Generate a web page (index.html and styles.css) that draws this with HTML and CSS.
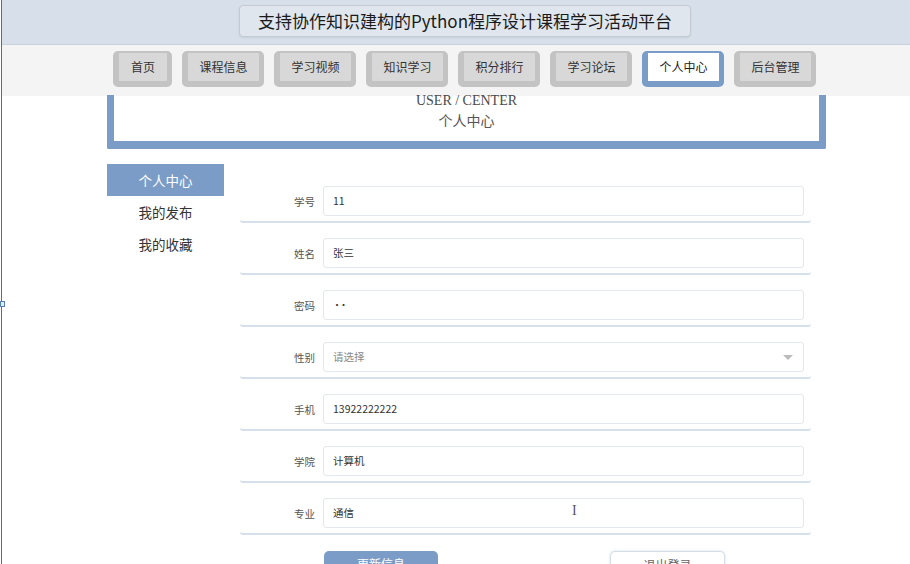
FILE: index.html
```html
<!DOCTYPE html>
<html lang="zh">
<head>
<meta charset="utf-8">
<title>个人中心</title>
<link rel="stylesheet" href="styles.css">
</head>
<body>
<div class="page">
  <span class="edge-handle"></span>
  <header class="top">
    <div class="title">支持协作知识建构的Python程序设计课程学习活动平台</div>
  </header>
  <nav class="navstrip">
    <div class="nav">
      <a class="nbtn short">首页</a>
      <a class="nbtn">课程信息</a>
      <a class="nbtn">学习视频</a>
      <a class="nbtn">知识学习</a>
      <a class="nbtn">积分排行</a>
      <a class="nbtn">学习论坛</a>
      <a class="nbtn active">个人中心</a>
      <a class="nbtn">后台管理</a>
    </div>
  </nav>
  <div class="wrap">
    <section class="banner">
      <div class="en">USER / CENTER</div>
      <div class="cn">个人中心</div>
    </section>
    <div class="main">
      <aside class="side">
        <div class="sitem on">个人中心</div>
        <div class="sitem">我的发布</div>
        <div class="sitem">我的收藏</div>
      </aside>
      <form class="form">
        <div class="row"><label>学号</label><div class="inp">11</div></div>
        <div class="row"><label>姓名</label><div class="inp">张三</div></div>
        <div class="row"><label>密码</label><div class="inp dots">••</div></div>
        <div class="row"><label>性别</label><div class="inp sel"><span class="ph">请选择</span><span class="caret"></span></div></div>
        <div class="row"><label>手机</label><div class="inp">13922222222</div></div>
        <div class="row"><label>学院</label><div class="inp">计算机</div></div>
        <div class="row"><label>专业</label><div class="inp">通信<span class="ibeam">I</span></div></div>
        <div class="btns">
          <div class="btn primary">更新信息</div>
          <div class="btn plain">退出登录</div>
        </div>
      </form>
    </div>
  </div>
</div>
</body>
</html>
```

FILE: styles.css
```css
* { box-sizing: border-box; }
html, body { margin: 0; padding: 0; background: #fff; overflow: hidden; }
body {
  font-family: "Noto Sans CJK SC", "Noto Sans", sans-serif;
  color: #333;
  width: 910px;
  height: 564px;
}
.page {
  position: relative;
  margin-left: 1px;
  border-left: 1px solid #4f6f9d;
  height: 564px;
}
.edge-handle {
  position: absolute;
  left: -2px;
  top: 301px;
  width: 5px;
  height: 6px;
  background: #d4f0fb;
  border: 1px solid #5a7fae;
}
.top {
  height: 45px;
  background: #d7e0ea;
  display: flex;
  justify-content: center;
  padding-top: 5px;
  padding-left: 18px;
  border-bottom: 1px solid #c9d1da;
}
.title {
  width: 452px;
  height: 32px;
  background: #dfe6ee;
  border: 1px solid #c3cad3;
  border-radius: 4px;
  box-shadow: 0 1px 2px rgba(0,0,0,0.08);
  font-size: 17px;
  line-height: 29px;
  color: #1a1a1a;
  text-align: center;
  white-space: nowrap;
}
.navstrip {
  height: 51px;
  background: #f4f4f4;
  padding-top: 6px;
}
.nav {
  display: flex;
  gap: 10px;
  margin-left: 111px;
}
.nbtn {
  display: block;
  width: 82px;
  height: 36px;
  background: #d8d8d8;
  border-style: solid;
  border-color: #c3c3c3;
  border-width: 2px 5px 6px 6px;
  border-radius: 5px;
  font-size: 12px;
  line-height: 27px;
  text-align: center;
  color: #333;
  white-space: nowrap;
}
.nbtn.short { width: 59px; }
.nbtn.active {
  background: #fff;
  border-color: #7a9dc8;
  color: #222;
}
.wrap {
  width: 719px;
  margin-left: 105px;
}
.banner {
  height: 54px;
  border-style: solid;
  border-color: #7a9cc6;
  border-width: 0 7px 8px 7px;
  border-radius: 0 0 2px 2px;
  text-align: center;
  font-family: "Liberation Serif", "Noto Sans CJK SC", serif;
  color: #4a4a4a;
  font-size: 14px;
}
.banner .en { line-height: 12px; margin-top: -1px; }
.banner .cn { margin-top: 7px; line-height: 16px; color: #555; }
.main {
  display: flex;
  gap: 16px;
  margin-top: 15px;
}
.side {
  width: 117px;
  flex: none;
}
.sitem {
  height: 32px;
  line-height: 32px;
  text-align: center;
  font-size: 13.5px;
  color: #333;
}
.sitem.on { background: #7a9cc6; color: #fff; }
.form {
  width: 571px;
  margin: 17px 0 0 0;
}
.row {
  display: flex;
  align-items: center;
  height: 42px;
  padding: 5px 7px 5px 0;
  border-bottom: 2px solid #d6e0ea;
  border-radius: 0 0 3px 3px;
  margin-bottom: 10px;
}
.row label {
  width: 75px;
  flex: none;
  text-align: right;
  font-size: 10.5px;
  color: #555;
  margin-right: 8px;
}
.inp {
  position: relative;
  flex: 1;
  height: 30px;
  border: 1px solid #e3e7ee;
  border-radius: 3px;
  padding: 0 9px;
  font-size: 10.5px;
  line-height: 28px;
  color: #333;
  background: #fff;
}
.inp.dots { font-size: 8px; letter-spacing: -1.5px; font-weight: bold; }
.inp.sel { display: flex; justify-content: space-between; align-items: center; }
.ph { color: #888; }
.caret {
  width: 0; height: 0;
  border-left: 5px solid transparent;
  border-right: 5px solid transparent;
  border-top: 5px solid #bbb;
  margin-right: 1px;
}
.ibeam {
  position: absolute;
  left: 248px;
  top: -2px;
  font-family: "Liberation Serif", serif;
  font-size: 14px;
  color: #555;
}
.btns {
  display: flex;
  gap: 172px;
  margin-left: 84px;
  margin-top: 16px;
}
.btn {
  width: 114px;
  height: 34px;
  border-radius: 5px;
  font-size: 12px;
  line-height: 26px;
  text-align: center;
}
.btn.primary { background: #7a9cc6; color: #fff; }
.btn.plain { width: 115px; background: #fff; border: 1px solid #d5dde7; box-shadow: 0 0 3px rgba(120,150,190,0.3); color: #666; }
```
